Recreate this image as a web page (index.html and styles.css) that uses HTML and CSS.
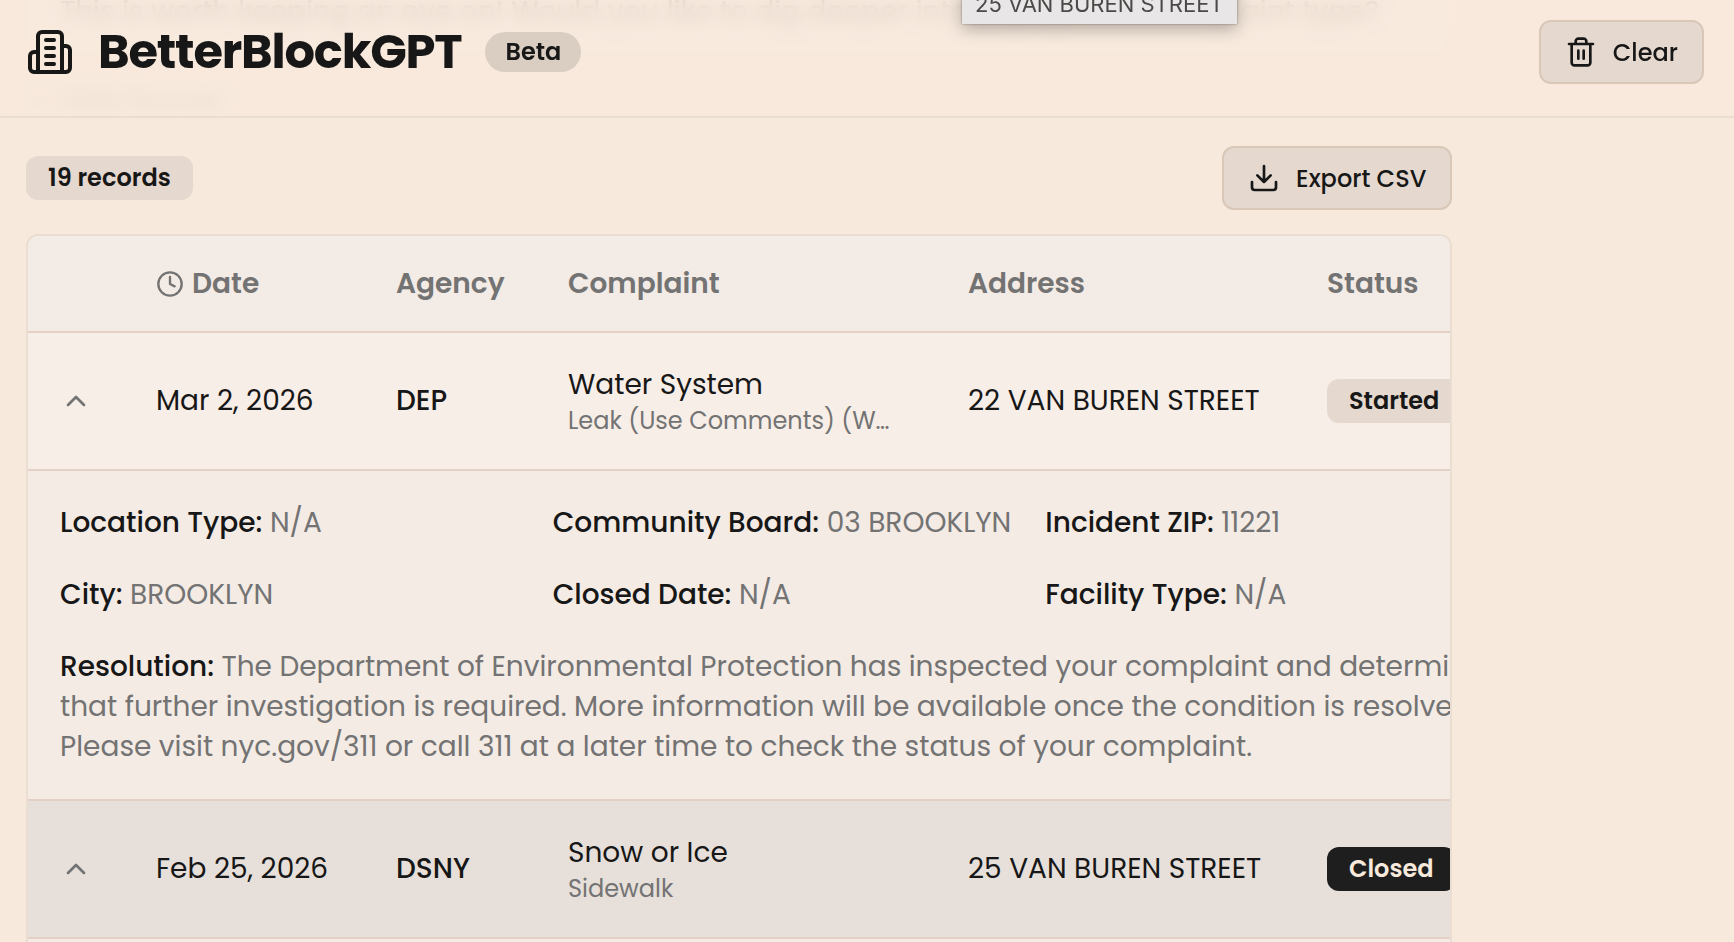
FILE: index.html
```html
<!DOCTYPE html>
<html lang="en">
<head>
    <meta charset="UTF-8">
    <meta name="viewport" content="width=device-width, initial-scale=1.0">
    <title>BetterBlockGPT</title>
    <link rel="stylesheet" href="styles.css">
</head>
<body>
    <header class="site-header">
        <svg class="logo" viewBox="0 0 24 24" aria-hidden="true">
            <path d="M6 22V4a2 2 0 0 1 2-2h8a2 2 0 0 1 2 2v18Z"/>
            <path d="M6 12H4a2 2 0 0 0-2 2v6a2 2 0 0 0 2 2h2"/>
            <path d="M18 9h2a2 2 0 0 1 2 2v9a2 2 0 0 1-2 2h-2"/>
            <path d="M10 6h4M10 10h4M10 14h4M10 18h4"/>
        </svg>
        <h1>BetterBlockGPT</h1>
        <span class="beta">Beta</span>
        <button type="button" class="btn btn-clear">
            <svg class="icon" viewBox="0 0 24 24" aria-hidden="true">
                <path d="M3 6h18M19 6v14c0 1-1 2-2 2H7c-1 0-2-1-2-2V6M8 6V4c0-1 1-2 2-2h4c1 0 2 1 2 2v2M10 11v6M14 11v6"/>
            </svg>
            Clear
        </button>
    </header>

    <main class="chat">
        <p class="message">This is worth keeping an eye on! Would you like to dig deeper into any specific complaint type?</p>
        <p class="sources">
            <svg class="icon-sm" viewBox="0 0 24 24" aria-hidden="true"><path d="m9 18 6-6-6-6"/></svg>
            Data Sources
        </p>

        <section class="results">
            <div class="toolbar">
                <span class="badge">19 records</span>
                <button type="button" class="btn">
                    <svg class="icon" viewBox="0 0 24 24" aria-hidden="true">
                        <path d="M12 3v12M7 10l5 5 5-5M21 15v4a2 2 0 0 1-2 2H5a2 2 0 0 1-2-2v-4"/>
                    </svg>
                    Export CSV
                </button>
            </div>

            <div class="table-wrap">
                <table>
                    <colgroup>
                        <col class="col-toggle">
                        <col class="col-date">
                        <col class="col-agency">
                        <col class="col-complaint">
                        <col class="col-address">
                        <col class="col-status">
                    </colgroup>
                    <thead>
                        <tr>
                            <th></th>
                            <th>
                                <span class="with-icon">
                                    <svg class="icon-sm" viewBox="0 0 24 24" aria-hidden="true"><circle cx="12" cy="12" r="10"/><path d="M12 6v6l4 2"/></svg>
                                    Date
                                </span>
                            </th>
                            <th>Agency</th>
                            <th>Complaint</th>
                            <th>Address</th>
                            <th>Status</th>
                        </tr>
                    </thead>
                    <tbody>
                        <tr>
                            <td>
                                <button type="button" class="toggle" aria-label="Collapse row">
                                    <svg class="icon" viewBox="0 0 24 24" aria-hidden="true"><path d="m18 15-6-6-6 6"/></svg>
                                </button>
                            </td>
                            <td>Mar 2, 2026</td>
                            <td class="agency">DEP</td>
                            <td>
                                <div>Water System</div>
                                <div class="sub">Leak (Use Comments) (WA2)</div>
                            </td>
                            <td>22 VAN BUREN STREET</td>
                            <td><span class="badge">Started</span></td>
                        </tr>
                        <tr class="detail">
                            <td colspan="6">
                                <div class="detail-grid">
                                    <div><b>Location Type:</b> N/A</div>
                                    <div><b>Community Board:</b> 03 BROOKLYN</div>
                                    <div><b>Incident ZIP:</b> 11221</div>
                                    <div><b>City:</b> BROOKLYN</div>
                                    <div><b>Closed Date:</b> N/A</div>
                                    <div><b>Facility Type:</b> N/A</div>
                                    <div class="full"><b>Resolution:</b> The Department of Environmental Protection has inspected your complaint and determined that further investigation is required. More information will be available once the condition is resolved. Please visit nyc.gov/311 or call 311 at a later time to check the status of your complaint.</div>
                                </div>
                            </td>
                        </tr>
                        <tr class="hovered">
                            <td>
                                <button type="button" class="toggle" aria-label="Collapse row">
                                    <svg class="icon" viewBox="0 0 24 24" aria-hidden="true"><path d="m18 15-6-6-6 6"/></svg>
                                </button>
                            </td>
                            <td>Feb 25, 2026</td>
                            <td class="agency">DSNY</td>
                            <td>
                                <div>Snow or Ice</div>
                                <div class="sub">Sidewalk</div>
                            </td>
                            <td>25 VAN BUREN STREET</td>
                            <td><span class="badge badge-closed">Closed</span></td>
                        </tr>
                        <tr class="detail">
                            <td colspan="6"></td>
                        </tr>
                    </tbody>
                </table>
            </div>
        </section>
    </main>

    <div class="tooltip" role="tooltip">25 VAN BUREN STREET</div>
</body>
</html>
```
FILE: styles.css
```css
:root {
    --bg: #f7e9dc;
    --text: #171717;
    --muted: #737373;
    --pill: #e5d9cf;
    --line: #e5d0c5;
    --edge: #eaddd1;
}

* {
    margin: 0;
    padding: 0;
    box-sizing: border-box;
}

body {
    height: 100vh;
    overflow: hidden;
    background: var(--bg);
    color: var(--text);
    font-family: Poppins, Inter, sans-serif;
    font-size: 28px;
    line-height: 40px;
}

svg {
    flex: none;
    fill: none;
    stroke: currentColor;
    stroke-width: 2;
    stroke-linecap: round;
    stroke-linejoin: round;
}

.icon {
    width: 32px;
    height: 32px;
}

.icon-sm {
    width: 28px;
    height: 28px;
}

/* Header, floats over the scrolled chat */
.site-header {
    position: fixed;
    top: 0;
    left: 0;
    right: 0;
    z-index: 10;
    display: flex;
    align-items: center;
    padding: 20px 30px 32px 26px;
    background: rgba(247, 233, 220, 0.9);
    backdrop-filter: blur(8px);
    border-bottom: 2px solid var(--edge);
}

.logo {
    width: 48px;
    height: 48px;
}

h1 {
    margin-left: 24px;
    font-size: 48px;
    line-height: 56px;
    font-weight: 700;
    letter-spacing: -0.025em;
}

.beta {
    margin-left: 24px;
    padding: 0 20px;
    border-radius: 20px;
    background: #dacec3;
    font-size: 24px;
    font-weight: 600;
}

.btn {
    display: flex;
    align-items: center;
    gap: 16px;
    height: 64px;
    padding: 0 24px;
    border: 2px solid #d9c7b8;
    border-radius: 12px;
    background: var(--pill);
    color: var(--text);
    font-family: inherit;
    font-size: 24px;
    font-weight: 500;
    cursor: pointer;
}

.btn-clear {
    margin-left: auto;
}

/* Chat */
.chat {
    padding: 0 30px 0 26px;
}

.message {
    width: 85%;
    padding: 0 34px 32px;
    border-radius: 0 0 16px 16px;
    background: #f7eee8;
    line-height: 24px;
    white-space: nowrap;
}

.sources {
    display: flex;
    align-items: center;
    gap: 8px;
    margin: 28px 0 30px;
    color: var(--muted);
    font-size: 24px;
    line-height: 32px;
}

.results {
    width: 85%;
}

.toolbar {
    display: flex;
    align-items: center;
    justify-content: space-between;
    margin-bottom: 24px;
}

.badge {
    display: inline-block;
    padding: 0 22px;
    border-radius: 12px;
    background: var(--pill);
    font-size: 24px;
    line-height: 44px;
    font-weight: 600;
}

.badge-closed {
    background: #1e1e1e;
    color: var(--bg);
}

/* Table */
.table-wrap {
    overflow: hidden;
    border: 2px solid var(--edge);
    border-radius: 12px;
    background: #f7eee8;
}

table {
    width: 1510px;
    table-layout: fixed;
    border-collapse: separate;
    border-spacing: 0;
}

.col-toggle { width: 96px; }
.col-date { width: 240px; }
.col-agency { width: 172px; }
.col-complaint { width: 400px; }
.col-address { width: 359px; }
.col-status { width: 243px; }

th,
td {
    padding: 0 32px;
    border-bottom: 2px solid var(--line);
    text-align: left;
    vertical-align: middle;
    white-space: nowrap;
}

th {
    height: 97px;
    background: #f3ebe5;
    color: var(--muted);
    font-weight: 600;
}

td {
    height: 138px;
}

.with-icon {
    display: flex;
    align-items: center;
    gap: 8px;
}

.toggle {
    display: block;
    border: 0;
    background: none;
    color: var(--muted);
    cursor: pointer;
}

.toggle svg {
    display: block;
}

.agency {
    font-weight: 500;
}

.sub {
    max-width: 324px;
    overflow: hidden;
    color: var(--muted);
    font-size: 24px;
    line-height: 32px;
    text-overflow: ellipsis;
}

.hovered td {
    background: #e7e0da;
}

.detail td {
    padding: 32px;
    background: #f4ebe5;
    color: var(--muted);
    white-space: normal;
}

.detail-grid {
    display: grid;
    grid-template-columns: repeat(3, 1fr);
    gap: 32px;
}

.detail b {
    color: var(--text);
    font-weight: 500;
}

.full {
    grid-column: 1 / -1;
}

/* Tooltip of the hovered address, cut by the window edge */
.tooltip {
    position: fixed;
    top: -16px;
    left: 962px;
    z-index: 20;
    padding: 0 13px;
    background: #e8e6e6;
    box-shadow: 0 0 2px rgba(0, 0, 0, 0.4), 0 6px 16px rgba(0, 0, 0, 0.25);
    color: #4c4a48;
    font-family: Inter, sans-serif;
    font-size: 22px;
    line-height: 40px;
}
```
